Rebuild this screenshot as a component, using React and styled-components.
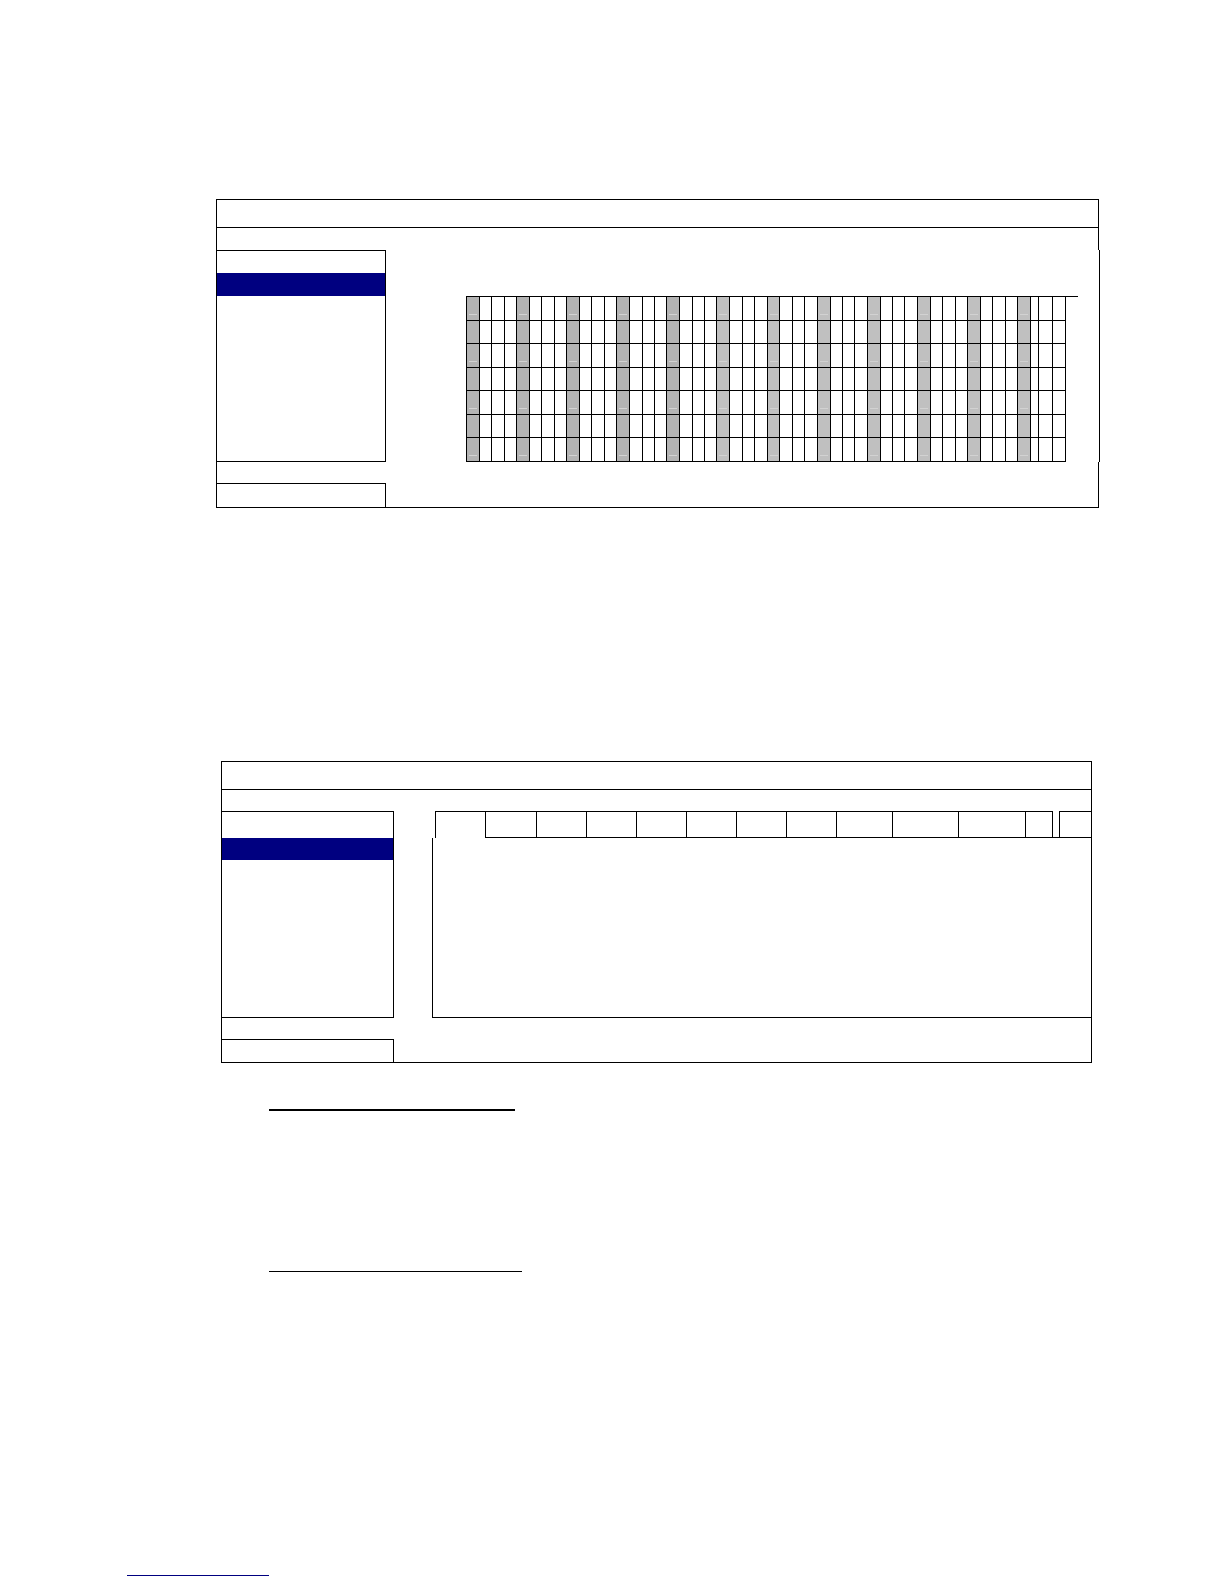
import React from "react";
import styled, { createGlobalStyle } from "styled-components";

const GlobalStyle = createGlobalStyle`
  * {
    box-sizing: border-box;
  }
  body {
    margin: 0;
    background: #fff;
    font-family: "Liberation Sans", sans-serif;
  }
`;

const Page = styled.main`
  padding: 199px 125px 0 216px;
`;

const Panel = styled.section`
  display: flex;
  flex-direction: column;
`;

const TabPanel = styled(Panel)`
  margin: 253px 7px 0 5px;
`;

const TitleBar = styled.header`
  height: 29px;
  border: 1px solid #000;
`;

const Strip = styled.div`
  height: ${(props) => props.$height}px;
  border: solid #000;
  border-width: 0 1px;
`;

const Body = styled.div`
  display: flex;
  border: solid #000;
  border-width: 0 1px;
`;

// the schedule row is one pixel wider than the rest of its panel
const WideBody = styled(Body)`
  margin-right: -1px;
`;

const List = styled.ul`
  flex: none;
  list-style: none;
  margin: 0;
  padding: 0;
  width: ${(props) => props.$width}px;
  height: ${(props) => props.$height}px;
  border: solid #000;
  border-width: 1px 1px 1px 0;
`;

const Item = styled.li`
  height: ${(props) => props.$height}px;
  background: ${(props) => (props.$selected ? "#000080" : "transparent")};
`;

const Footer = styled.footer`
  padding-top: 21px;
  border: solid #000;
  border-width: 0 1px 1px;
`;

const StatusBox = styled.div`
  width: ${(props) => props.$width}px;
  height: ${(props) => props.$height}px;
  border: solid #000;
  border-width: 1px 1px 0 0;
`;

const Schedule = styled.div`
  flex: 1;
  padding: 46px 21px 0 80px;
`;

const TimeLine = styled.div`
  border-top: 1px solid #000;
  padding-right: 12px;
`;

const Table = styled.table`
  width: 100%;
  table-layout: fixed;
  border-spacing: 0;
  border-left: 1px solid #000;
`;

const Col = styled.col`
  width: ${(props) => props.$width}px;
`;

const Row = styled.tr`
  height: ${(props) => props.$height}px;
`;

const Cell = styled.td`
  padding: 0;
  border: solid #000;
  border-width: 0 1px 1px 0;
  background-color: ${(props) => props.$shade || "transparent"};
  background-image: ${(props) =>
    props.$mark ? "linear-gradient(#d2d2d2, #d2d2d2)" : "none"};
  background-position: 2px 17px;
  background-size: 8px 1px;
  background-repeat: no-repeat;
`;

const Main = styled.div`
  flex: 1;
  display: flex;
  flex-direction: column;
  margin-left: 38px;
`;

const Tabs = styled.div`
  display: grid;
  grid-template-columns: 50fr 51fr repeat(6, 50fr) 56fr 66fr 67fr 27fr 7fr 32fr;
  height: 27px;
  padding-left: 3px;
`;

const Tab = styled.button`
  min-width: 0;
  padding: 0;
  background: transparent;
  border: solid #000;
  border-width: ${(props) => (props.$active ? "1px 0 0 1px" : "1px 0 1px 1px")};
`;

const TabGap = styled.span`
  border: solid #000;
  border-width: 0 0 1px 1px;
`;

const TabContent = styled.div`
  flex: 1;
  border: solid #000;
  border-width: 0 0 1px 1px;
`;

const Rule = styled.hr`
  width: ${(props) => props.$width}px;
  margin: ${(props) => props.$space}px 0 0 53px;
  border: 0;
  border-top: ${(props) => props.$weight}px solid #000;
`;

const PageFooter = styled.div`
  padding: 280px 0 8px 127px;
`;

const Link = styled.a`
  display: block;
  width: 142px;
  height: 24px;
  border-bottom: 1px solid #000080;
`;

const columns = [
  13, 12, 13, 12, 13, 12, 13, 12, 13, 12, 13, 12, 13, 13, 12, 12,
  13, 13, 12, 12, 13, 13, 12, 13, 12, 13, 12, 13, 13, 12, 12, 13,
  13, 12, 12, 13, 13, 12, 13, 12, 13, 12, 13, 12, 13, 8, 14, 13,
];
const rows = [24, 23, 24, 23, 24, 23, 24];
const tabs = [1, 2, 3, 4, 5, 6, 7, 8, 9, 10, 11, 12];

// every fourth column is the start of an hour
function shadeOf(index) {
  if (index % 4 !== 0) return null;
  return index < 20 ? "#b3b3b3" : "#c0c0c0";
}

function SchedulePanel() {
  return (
    <Panel>
      <TitleBar />
      <Strip $height={22} />
      <WideBody>
        <List $width={169} $height={212}>
          <Item $height={22} />
          <Item $height={23} $selected />
        </List>
        <Schedule>
          <TimeLine>
            <Table aria-label="Schedule">
              <colgroup>
                {columns.map((width, i) => (
                  <Col key={i} $width={width} />
                ))}
              </colgroup>
              <tbody>
                {rows.map((height, r) => (
                  <Row key={r} $height={height}>
                    {columns.map((_, c) => (
                      <Cell
                        key={c}
                        $shade={shadeOf(c)}
                        $mark={c % 4 === 0 && r % 2 === 0}
                      />
                    ))}
                  </Row>
                ))}
              </tbody>
            </Table>
          </TimeLine>
        </Schedule>
      </WideBody>
      <Footer>
        <StatusBox $width={169} $height={24} />
      </Footer>
    </Panel>
  );
}

function SettingsPanel() {
  return (
    <TabPanel>
      <TitleBar />
      <Strip $height={21} />
      <Body>
        <List $width={172} $height={207}>
          <Item $height={26} />
          <Item $height={22} $selected />
        </List>
        <Main>
          <Tabs role="tablist">
            {tabs.map((tab) => (
              <Tab
                key={tab}
                type="button"
                role="tab"
                aria-label={`Tab ${tab}`}
                aria-selected={tab === 1}
                $active={tab === 1}
              />
            ))}
            <TabGap />
            <Tab type="button" role="tab" aria-label="More" />
          </Tabs>
          <TabContent />
        </Main>
      </Body>
      <Footer>
        <StatusBox $width={172} $height={23} />
      </Footer>
    </TabPanel>
  );
}

function App() {
  return (
    <>
      <GlobalStyle />
      <Page>
        <SchedulePanel />
        <SettingsPanel />
        <Rule $width={246} $space={46} $weight={2} />
        <Rule $width={253} $space={160} $weight={1} />
      </Page>
      <PageFooter>
        <Link href="#top" aria-label="Website" />
      </PageFooter>
    </>
  );
}

export default App;
